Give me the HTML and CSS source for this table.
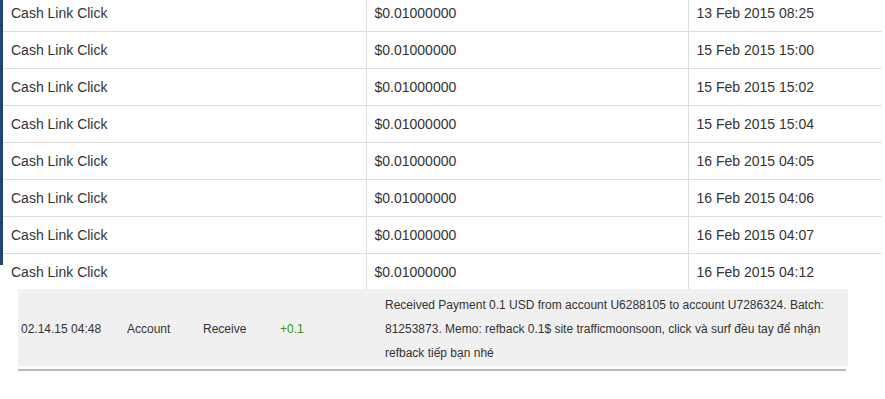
FILE: index.html
```html
<!DOCTYPE html>
<html>
<head>
<meta charset="utf-8">
<link rel="stylesheet" href="styles.css">
</head>
<body>
<div class="ledger">
  <table class="tx">
    <colgroup><col class="c-name"><col class="c-amt"><col class="c-date"></colgroup>
    <tbody>
      <tr><td>Cash Link Click</td><td>$0.01000000</td><td>13 Feb 2015 08:25</td></tr>
      <tr><td>Cash Link Click</td><td>$0.01000000</td><td>15 Feb 2015 15:00</td></tr>
      <tr><td>Cash Link Click</td><td>$0.01000000</td><td>15 Feb 2015 15:02</td></tr>
      <tr><td>Cash Link Click</td><td>$0.01000000</td><td>15 Feb 2015 15:04</td></tr>
      <tr><td>Cash Link Click</td><td>$0.01000000</td><td>16 Feb 2015 04:05</td></tr>
      <tr><td>Cash Link Click</td><td>$0.01000000</td><td>16 Feb 2015 04:06</td></tr>
      <tr><td>Cash Link Click</td><td>$0.01000000</td><td>16 Feb 2015 04:07</td></tr>
      <tr><td>Cash Link Click</td><td>$0.01000000</td><td>16 Feb 2015 04:12</td></tr>
    </tbody>
  </table>
</div>
<div class="history">
  <table class="hist">
    <colgroup><col class="h-date"><col class="h-acc"><col class="h-type"><col class="h-amt"><col></colgroup>
    <tbody>
      <tr>
        <td>02.14.15 04:48</td>
        <td>Account</td>
        <td>Receive</td>
        <td class="plus">+0.1</td>
        <td class="memo">Received Payment 0.1 USD from account U6288105 to account U7286324. Batch: 81253873. Memo: refback 0.1$ site trafficmoonsoon, click và surf đều tay để nhận refback tiếp bạn nhé</td>
      </tr>
    </tbody>
  </table>
  <div class="rule"></div>
</div>
</body>
</html>
```
FILE: styles.css
```css
html, body {
  margin: 0;
  padding: 0;
  background: #fff;
}
body {
  font-family: "Liberation Sans", Arial, Helvetica, sans-serif;
  color: #333;
}
.ledger {
  margin-top: -6px;
  width: 882px;
  padding-left: 3px;
  box-sizing: border-box;
  background: linear-gradient(#1f4577, #1f4577) no-repeat 0 0 / 3px 271px;
}
.tx {
  width: 879px;
  border-collapse: collapse;
  table-layout: fixed;
  font-size: 14px;
  line-height: 20px;
}
.c-name { width: 363px; }
.c-amt { width: 322px; }
.c-date { width: 194px; }
.tx td {
  padding: 8px;
  border-top: 1px solid #ddd;
  vertical-align: top;
  white-space: nowrap;
}
.tx td + td {
  border-left: 1px solid #ddd;
}
.history {
  margin-top: -1px;
  margin-left: 18px;
  width: 830px;
}
.hist {
  width: 830px;
  border-collapse: collapse;
  table-layout: fixed;
  background: #f0f0f0;
  font-size: 12px;
  line-height: 24px;
}
.h-date { width: 106px; }
.h-acc { width: 76px; }
.h-type { width: 77px; }
.h-amt { width: 105px; }
.hist td {
  padding: 4px 3px 1px;
  vertical-align: middle;
}
.hist .plus {
  color: #2f9a12;
}
.hist .memo {
  padding-right: 4px;
}
.rule {
  margin-top: 3px;
  margin-left: 0;
  width: 828px;
  border-top: 2px solid #b8b8b8;
}
```
